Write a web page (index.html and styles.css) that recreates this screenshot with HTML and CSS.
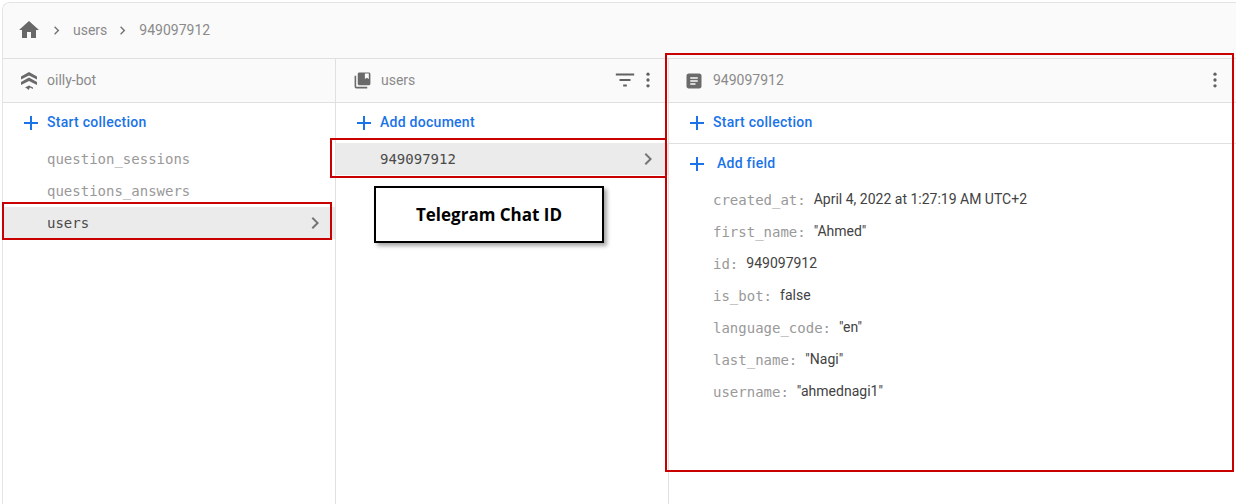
FILE: index.html
```html
<!DOCTYPE html>
<html lang="en">
<head>
<meta charset="utf-8">
<title>Firestore users</title>
<link rel="stylesheet" href="styles.css">
</head>
<body>
<main class="card">
  <nav class="crumbs">
    <svg class="home" viewBox="0 0 24 24"><path d="M10 20v-6h4v6h5v-8h3L12 3 2 12h3v8z"/></svg>
    <svg class="chev crumb-first" viewBox="0 0 24 24"><path d="M8.6 16.6 13.2 12 8.6 7.4 10 6l6 6-6 6z"/></svg>
    <span class="crumb">users</span>
    <svg class="chev" viewBox="0 0 24 24"><path d="M8.6 16.6 13.2 12 8.6 7.4 10 6l6 6-6 6z"/></svg>
    <span class="crumb">949097912</span>
  </nav>
  <div class="columns">
    <section class="col col-root">
      <header class="col-head">
        <svg class="head-icon" viewBox="0 0 18 18"><path d="M9 0 17 4.500V7.500L9 3.500 1 7.500V4.500zM9 5.500 17 10V13L9 9 1 13V10zM5 15.500 9 13.500 13 15.500V17L10 15.500 8.500 18 7 16.500z"/></svg>
        <span class="head-title">oilly-bot</span>
      </header>
      <div class="action"><svg class="plus" viewBox="0 0 16 16"><path d="M7 1h2v6h6v2H9v6H7V9H1V7h6z"/></svg><span>Start collection</span></div>
      <ul class="list list-root">
        <li class="item">question_sessions</li>
        <li class="item">questions_answers</li>
        <li class="item selected">users<svg class="chev item-chev" viewBox="0 0 24 24"><path d="M8.600 16.600 13.200 12 8.600 7.400 10 6l6 6-6 6z"/></svg></li>
      </ul>
    </section>
    <section class="col col-mid">
      <header class="col-head">
        <svg class="head-icon" viewBox="0 0 24 24"><path d="M4 6H2v14c0 1.100.9 2 2 2h14v-2H4z"/><path fill-rule="evenodd" d="M8 2h12c1.100 0 2 .9 2 2v12c0 1.100-.9 2-2 2H8c-1.100 0-2-.9-2-2V4c0-1.100.9-2 2-2zm7 1v7l2.500-1.500L20 10V3z"/></svg>
        <span class="head-title">users</span>
        <span class="head-tools">
          <svg class="tool" viewBox="0 0 24 24"><path d="M2 5h20v2H2zM6 11h12v2H6zM10 17h4v2h-4z"/></svg>
          <svg class="tool dots" viewBox="0 0 24 24"><circle cx="12" cy="5" r="2"/><circle cx="12" cy="12" r="2"/><circle cx="12" cy="19" r="2"/></svg>
        </span>
      </header>
      <div class="action"><svg class="plus" viewBox="0 0 16 16"><path d="M7 1h2v6h6v2H9v6H7V9H1V7h6z"/></svg><span>Add document</span></div>
      <ul class="list">
        <li class="item selected">949097912<svg class="chev item-chev" viewBox="0 0 24 24"><path d="M8.600 16.600 13.200 12 8.600 7.400 10 6l6 6-6 6z"/></svg></li>
      </ul>
    </section>
    <section class="col col-doc">
      <header class="col-head">
        <svg class="head-icon" viewBox="0 0 24 24"><path fill-rule="evenodd" d="M5 2h14c1.700 0 3 1.300 3 3v14c0 1.700-1.300 3-3 3H5c-1.700 0-3-1.300-3-3V5c0-1.700 1.300-3 3-3zm2 5v2h10V7zm0 4v2h10v-2zm0 4v2h7v-2z"/></svg>
        <span class="head-title">949097912</span>
        <span class="head-tools">
          <svg class="tool dots" viewBox="0 0 24 24"><circle cx="12" cy="5" r="2"/><circle cx="12" cy="12" r="2"/><circle cx="12" cy="19" r="2"/></svg>
        </span>
      </header>
      <div class="action action-rule"><svg class="plus" viewBox="0 0 16 16"><path d="M7 1h2v6h6v2H9v6H7V9H1V7h6z"/></svg><span>Start collection</span></div>
      <div class="action action-field"><svg class="plus" viewBox="0 0 16 16"><path d="M7 1h2v6h6v2H9v6H7V9H1V7h6z"/></svg><span>Add field</span></div>
      <dl class="fields">
        <div class="field"><dt>created_at:</dt><dd>April 4, 2022 at 1:27:19 AM UTC+2</dd></div>
        <div class="field"><dt>first_name:</dt><dd>"Ahmed"</dd></div>
        <div class="field"><dt>id:</dt><dd>949097912</dd></div>
        <div class="field"><dt>is_bot:</dt><dd>false</dd></div>
        <div class="field"><dt>language_code:</dt><dd>"en"</dd></div>
        <div class="field"><dt>last_name:</dt><dd>"Nagi"</dd></div>
        <div class="field"><dt>username:</dt><dd>"ahmednagi1"</dd></div>
      </dl>
    </section>
  </div>
</main>
<div class="mark mark-users"></div>
<div class="mark mark-row"></div>
<div class="mark mark-doc"></div>
<div class="label">Telegram Chat ID</div>
</body>
</html>
```
FILE: styles.css
```css
* { box-sizing: border-box; }
html, body { margin: 0; height: 504px; overflow: hidden; background: #fff; }
body {
  padding: 2px 0 0 2px;
  font-family: Roboto, "Liberation Sans", sans-serif;
  font-size: 14px;
  color: #212121;
}
.card {
  height: 502px;
  display: flex;
  flex-direction: column;
  border-top: 1px solid #e4e4e4;
  border-left: 1px solid #e4e4e4;
  border-top-left-radius: 8px;
  overflow: hidden;
}
.crumbs {
  height: 56px;
  flex: none;
  display: flex;
  align-items: center;
  padding: 0 0 1px 14px;
  background: #fafafa;
  border-bottom: 1px solid #e0e0e0;
  color: #8a8a8a;
}
.home { width: 24px; height: 24px; fill: #686868; margin-right: 2px; }
.chev { width: 17px; height: 17px; fill: #757575; }
.crumb-first { margin: 1px 3px 0 5px; }
.crumb { margin-right: 7px; }
.crumbs .chev + .crumb { margin-left: 5px; }
.crumb + .chev { margin-left: 0; margin-right: 3px; }
.columns { flex: 1; display: grid; grid-template-columns: 333px 333px 1fr; min-height: 0; }
.col { border-right: 1px solid #e0e0e0; }
.col-doc { border-right: 0; }
.col-head {
  height: 44px;
  display: flex;
  align-items: center;
  padding: 0 0 2px 16px;
  background: #fafafa;
  border-bottom: 1px solid #e0e0e0;
  color: #8a8a8a;
}
.head-icon { width: 18px; height: 18px; fill: #6a6a6a; margin-right: 10px; flex: none; position: relative; top: 1px; }
.col-root .head-icon { margin-left: 1px; margin-right: 9px; }
.col-mid .col-head { padding-left: 17px; }
.col-mid .head-icon { width: 19px; height: 19px; margin-right: 9px; }
.head-title { flex: 1; }
.head-tools { display: flex; align-items: center; gap: 2px; margin-right: 10px; }
.col-doc .head-tools { margin-right: 11px; }
.tool { width: 22px; height: 22px; fill: #616161; }
.dots { width: 20px; height: 20px; }
.action {
  height: 40px;
  display: flex;
  align-items: center;
  padding: 0 0 2px 20px;
  color: #1a73e8;
  font-weight: 500;
  letter-spacing: .27px;
  gap: 8px;
}
.plus { width: 16px; height: 16px; fill: #1a73e8; flex: none; position: relative; top: 1px; }
.action-rule { border-bottom: 1px solid #e0e0e0; height: 41px; }
.action-field { gap: 12px; }
.list { list-style: none; margin: 0; padding: 0; }
.item {
  height: 32px;
  display: flex;
  align-items: center;
  justify-content: space-between;
  padding: 0 8px 0 44px;
  font-family: "DejaVu Sans Mono", monospace;
  font-size: 14px;
  color: #999;
}
.item.selected { background: #ebebeb; color: #4a4a4a; }
.item-chev { width: 24px; height: 24px; fill: #757575; }
.fields { margin: 0; padding: 0; }
.field { height: 32px; display: flex; align-items: center; padding-left: 44px; gap: 8px; }
.field dt { font-family: "DejaVu Sans Mono", monospace; color: #999; }
.field dd { margin: 0; color: #424242; position: relative; top: -1px; }
.mark { position: absolute; border: 2px solid #c80000; pointer-events: none; }
.mark-users { left: 2px; top: 202px; width: 330px; height: 38px; }
.mark-row { left: 330px; top: 138px; width: 337px; height: 40px; }
.mark-doc { left: 665px; top: 53px; width: 569px; height: 419px; }
.label {
  position: absolute;
  left: 374px;
  top: 186px;
  width: 230px;
  height: 57px;
  display: flex;
  align-items: center;
  justify-content: center;
  background: #fff;
  border: 2px solid #000;
  box-shadow: 3px 3px 4px rgba(0,0,0,.35);
  font-family: "Open Sans", sans-serif;
  font-weight: 700;
  font-size: 17px;
  color: #000;
}
```
